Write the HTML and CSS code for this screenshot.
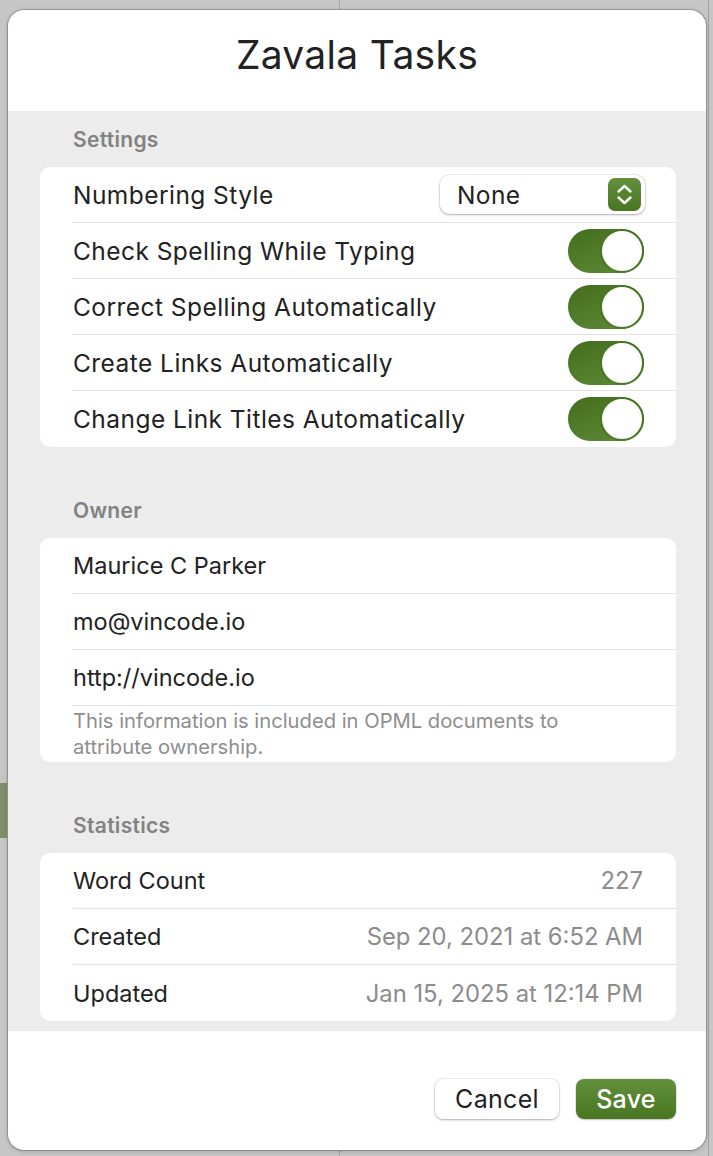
FILE: index.html
```html
<!DOCTYPE html>
<html lang="en">
<head>
<meta charset="utf-8">
<title>Zavala Tasks</title>
<link rel="stylesheet" href="styles.css">
</head>
<body>
<div class="sheet">
  <header class="sheet-header">
    <h1 class="sheet-title">Zavala Tasks</h1>
  </header>
  <main class="sheet-content">
    <div class="section-label">Settings</div>
    <div class="card card-settings">
      <div class="row">
        <span class="row-label">Numbering Style</span>
        <div class="popup">
          <span class="popup-value">None</span>
          <span class="stepper">
            <svg width="33" height="33" viewBox="0 0 33 33"><path d="M10.5 13.5 L16.5 8 L22.5 13.5" fill="none" stroke="#fff" stroke-width="2.4" stroke-linecap="round" stroke-linejoin="round"/><path d="M10.5 19.5 L16.5 25 L22.5 19.5" fill="none" stroke="#fff" stroke-width="2.4" stroke-linecap="round" stroke-linejoin="round"/></svg>
          </span>
        </div>
      </div>
      <div class="row">
        <span class="row-label">Check Spelling While Typing</span>
        <span class="toggle"><span class="knob"></span></span>
      </div>
      <div class="row">
        <span class="row-label">Correct Spelling Automatically</span>
        <span class="toggle"><span class="knob"></span></span>
      </div>
      <div class="row">
        <span class="row-label">Create Links Automatically</span>
        <span class="toggle"><span class="knob"></span></span>
      </div>
      <div class="row">
        <span class="row-label">Change Link Titles Automatically</span>
        <span class="toggle"><span class="knob"></span></span>
      </div>
    </div>

    <div class="section-label">Owner</div>
    <div class="card">
      <div class="row"><span class="row-label">Maurice C Parker</span></div>
      <div class="row"><span class="row-label">mo@vincode.io</span></div>
      <div class="row"><span class="row-label">http://vincode.io</span></div>
      <div class="card-note">This information is included in OPML documents to attribute ownership.</div>
    </div>

    <div class="section-label">Statistics</div>
    <div class="card">
      <div class="row"><span class="row-label">Word Count</span><span class="row-value">227</span></div>
      <div class="row"><span class="row-label">Created</span><span class="row-value">Sep 20, 2021 at 6:52 AM</span></div>
      <div class="row"><span class="row-label">Updated</span><span class="row-value">Jan 15, 2025 at 12:14 PM</span></div>
    </div>
  </main>
  <footer class="sheet-footer">
    <button class="btn btn-cancel" type="button">Cancel</button>
    <button class="btn btn-save" type="button">Save</button>
  </footer>
</div>
</body>
</html>
```

FILE: styles.css
```css
* { box-sizing: border-box; }

html, body { height: 100%; }

body {
  margin: 0;
  padding: 10px 7px 6px 8px;
  font-family: "Inter", "Noto Sans", "Liberation Sans", sans-serif;
  color: #222;
  background:
    linear-gradient(#7d8f68, #7d8f68) 0 783px / 7px 55px no-repeat,
    linear-gradient(to right, transparent 339px, #a9a9a9 339px, #a9a9a9 340px, transparent 340px),
    linear-gradient(to right, transparent 708px, #a3a3a3 708px, #a3a3a3 709px, transparent 709px),
    #c6c6c6;
}

.sheet {
  width: 698px;
  height: 1140px;
  display: flex;
  flex-direction: column;
  background: #fff;
  border-radius: 16px;
  overflow: hidden;
  box-shadow: 0 0 0 1px rgba(0, 0, 0, 0.18), 0 1px 4px rgba(0, 0, 0, 0.25);
}

.sheet-header {
  height: 101px;
  flex: none;
  display: flex;
  justify-content: center;
  padding-top: 22px;
}

.sheet-title {
  margin: 0;
  font-size: 39px;
  line-height: 46px;
  font-weight: 400;
  color: #222;
  letter-spacing: 0.3px;
}

.sheet-content {
  flex: 1;
  background: #ececec;
  padding: 0 30px 10px 32px;
  display: flex;
  flex-direction: column;
}

.section-label {
  height: 56px;
  display: flex;
  align-items: center;
  padding-left: 33px;
  font-size: 21px;
  letter-spacing: 0.3px;
  font-weight: 600;
  color: #828282;
}

.card + .section-label { margin-top: 35px; }

.card {
  background: #fff;
  border-radius: 10px;
  display: flex;
  flex-direction: column;
  padding-left: 33px;
}

.row {
  height: 56px;
  display: flex;
  align-items: center;
  justify-content: space-between;
  padding-right: 33px;
  border-bottom: 1px solid #e2e2e2;
}

.card > .row:last-child { border-bottom: none; }

.row-label {
  font-size: 23.5px;
  color: #222;
}

.card-settings .row-label {
  font-size: 24.5px;
  letter-spacing: 0.45px;
}

.row-value {
  font-size: 23.8px;
  color: #8c8c8c;
}

.card-note {
  height: 56px;
  padding: 2px 60px 0 0;
  font-size: 20.2px;
  line-height: 26px;
  color: #8e8e8e;
}

.popup {
  width: 205px;
  height: 39px;
  margin-right: -2px;
  border-radius: 9px;
  background: #fff;
  box-shadow: 0 0 0 0.5px rgba(0, 0, 0, 0.12), 0 1px 2.5px rgba(0, 0, 0, 0.28);
  display: flex;
  align-items: center;
  justify-content: space-between;
  padding: 0 4px 0 17px;
}

.popup-value {
  font-size: 24.5px;
  letter-spacing: 0.4px;
  color: #222;
}

.stepper {
  width: 33px;
  height: 33px;
  border-radius: 7px;
  background: linear-gradient(#63903d, #487520);
  display: flex;
}

.toggle {
  width: 76px;
  height: 44px;
  margin-right: -1px;
  border-radius: 22px;
  background: linear-gradient(160deg, #436d1c, #5f8c39);
  display: flex;
  justify-content: flex-end;
}

.knob {
  width: 44px;
  height: 44px;
  border-radius: 50%;
  background: #fff;
  border: 2px solid #4a7623;
  box-shadow: inset 0 -1px 1px rgba(0, 0, 0, 0.08);
}

.sheet-footer {
  height: 119px;
  flex: none;
  display: flex;
  justify-content: flex-end;
  align-items: flex-start;
  gap: 17px;
  padding: 48px 30px 0 0;
}

.btn {
  height: 40px;
  border: none;
  border-radius: 8px;
  font-family: inherit;
  font-size: 25px;
  letter-spacing: 0.3px;
  padding: 0;
  cursor: default;
}

.btn-cancel {
  width: 124px;
  background: #fff;
  color: #222;
  box-shadow: 0 0 0 0.5px rgba(0, 0, 0, 0.12), 0 1px 2.5px rgba(0, 0, 0, 0.28);
}

.btn-save {
  width: 100px;
  background: linear-gradient(#63903d, #487520);
  color: #fff;
  font-weight: 500;
  box-shadow: 0 0 0 0.5px rgba(0, 0, 0, 0.1), 0 1px 2px rgba(0, 0, 0, 0.2);
}
```
